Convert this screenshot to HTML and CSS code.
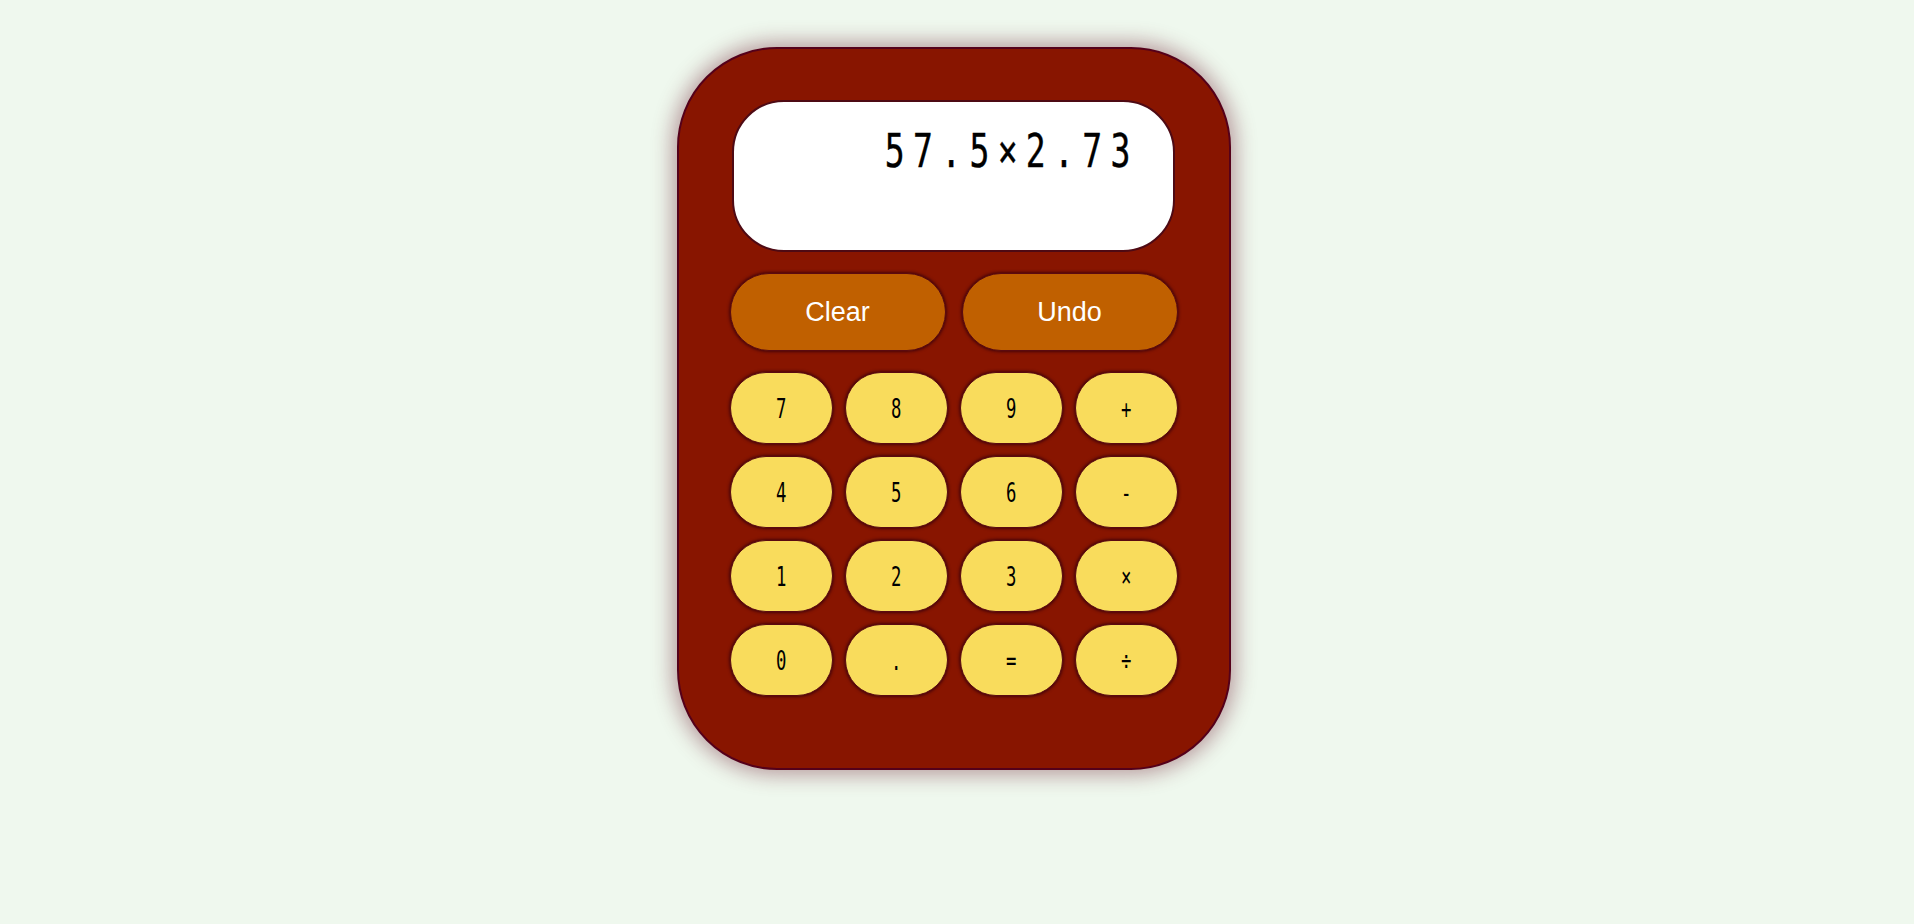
FILE: index.html
```html
<!DOCTYPE html>
<html lang="en">
<head>
<meta charset="utf-8">
<title>Calculator</title>
<link rel="stylesheet" href="styles.css">
</head>
<body>
<main class="page">
  <div class="calc">
    <div class="display"><span class="display-text">57.5×2.73</span></div>
    <div class="actions">
      <button class="action">Clear</button>
      <button class="action">Undo</button>
    </div>
    <div class="keys">
      <button class="key"><span>7</span></button>
      <button class="key"><span>8</span></button>
      <button class="key"><span>9</span></button>
      <button class="key"><span>+</span></button>
      <button class="key"><span>4</span></button>
      <button class="key"><span>5</span></button>
      <button class="key"><span>6</span></button>
      <button class="key"><span>-</span></button>
      <button class="key"><span>1</span></button>
      <button class="key"><span>2</span></button>
      <button class="key"><span>3</span></button>
      <button class="key"><span>×</span></button>
      <button class="key"><span>0</span></button>
      <button class="key"><span>.</span></button>
      <button class="key"><span>=</span></button>
      <button class="key"><span>÷</span></button>
    </div>
  </div>
</main>
</body>
</html>
```

FILE: styles.css
```css
* { box-sizing: border-box; }

html, body {
  margin: 0;
  padding: 0;
  background: #eff8ee;
  height: 100%;
}

.page {
  display: flex;
  justify-content: center;
  align-items: flex-start;
  padding-top: 47px;
  padding-right: 7px;
}

.calc {
  width: 554px;
  height: 723px;
  background: #881500;
  border: 2px solid #55001a;
  border-radius: 100px;
  box-shadow: 0 0 20px 5px rgba(110, 30, 50, 0.42);
  padding-top: 51px;
  display: flex;
  flex-direction: column;
  align-items: center;
}

.display {
  width: 443px;
  height: 152px;
  background: #ffffff;
  border: 2px solid #4e0a14;
  border-radius: 52px;
  padding: 26px 34px 0 0;
  text-align: right;
  font-family: "DejaVu Sans Mono", "Liberation Mono", monospace;
  font-size: 46px;
  line-height: 46px;
  color: #000;
}

.display-text {
  display: inline-block;
  letter-spacing: 11.5px;
  transform: scaleX(0.72);
  transform-origin: right center;
  white-space: nowrap;
  -webkit-text-stroke: 0.4px #000;
}

.actions {
  width: 448px;
  display: grid;
  grid-template-columns: 1fr 1fr;
  column-gap: 16px;
  margin-top: 21px;
}

.action {
  height: 78px;
  background: #c06000;
  border: 1px solid #5a0a10;
  border-radius: 39px;
  box-shadow: 0 0 3px 1px rgba(60, 0, 10, 0.85);
  color: #ffffff;
  font-family: "Liberation Sans", Arial, sans-serif;
  font-size: 27px;
  padding: 0;
  cursor: pointer;
}

.keys {
  width: 448px;
  display: grid;
  grid-template-columns: repeat(4, 1fr);
  column-gap: 12px;
  row-gap: 12px;
  margin-top: 21px;
}

.key {
  height: 72px;
  background: #f9dc5c;
  border: 1px solid #5a0a10;
  border-radius: 36px;
  box-shadow: 0 0 3px 1px rgba(60, 0, 10, 0.85);
  color: #000;
  font-family: "DejaVu Sans Mono", "Liberation Mono", monospace;
  font-size: 27px;
  padding: 0;
  display: flex;
  align-items: center;
  justify-content: center;
  cursor: pointer;
}

.key span {
  display: inline-block;
  transform: scaleX(0.64);
}
```
